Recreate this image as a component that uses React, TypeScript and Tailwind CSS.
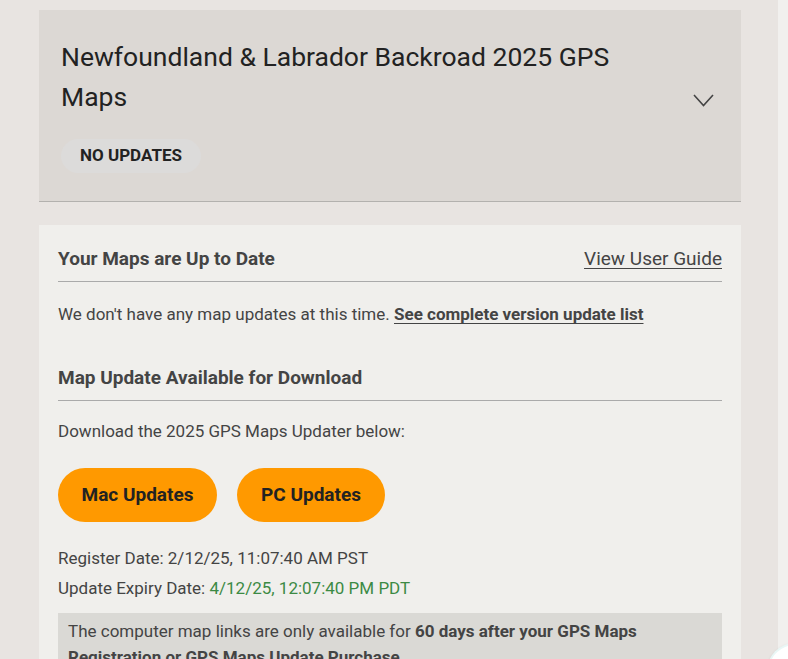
const font = { fontFamily: 'Roboto, "Liberation Sans", sans-serif' };

const App = () => {
  return (
    <div className="relative h-[659px] w-[788px] overflow-hidden bg-[#f1f0ee]" style={font}>
      <div className="h-full w-[778px] bg-[#e8e4e1] pl-[39px] pr-[37px] pt-[10px]">
        {/* Header */}
        <div className="border-b border-[#b3b1ae] bg-[#dcd8d4] pb-[28px] pl-[22px] pr-[27px] pt-[27px]">
          <div className="flex items-end justify-between">
            <h1 className="w-[600px] text-[26.5px] leading-[40px] text-[#222]">
              Newfoundland &amp; Labrador Backroad 2025 GPS Maps
            </h1>
            <svg width="21" height="13" viewBox="0 0 21 13" className="mb-[10px]" fill="none">
              <polyline points="1,1 10.5,11.5 20,1" stroke="#444" strokeWidth="1.6" />
            </svg>
          </div>
          <div className="mt-[22px] inline-flex h-[34px] items-center rounded-full bg-[#dcdbda] px-[19px] text-[17px] font-bold text-[#222]">
            NO UPDATES
          </div>
        </div>

        {/* Content */}
        <div className="mt-[23px] bg-[#f0efec] px-[19px] pt-[22px] text-[#444]">
          <div className="flex items-center justify-between border-b border-[#aaa] pb-[10px]">
            <h2 className="text-[19px] font-bold leading-[24px]">Your Maps are Up to Date</h2>
            <a className="text-[19px] leading-[24px] underline underline-offset-[3px]">View User Guide</a>
          </div>
          <p className="mt-[20px] text-[17px] leading-[24px]">
            We don't have any map updates at this time.{' '}
            <a className="font-bold underline underline-offset-[3px]">See complete version update list</a>
          </p>

          <h2 className="mt-[40px] border-b border-[#aaa] pb-[10px] text-[19px] font-bold leading-[24px]">
            Map Update Available for Download
          </h2>
          <p className="mt-[18px] text-[17px] leading-[24px]">Download the 2025 GPS Maps Updater below:</p>

          <div className="mt-[25px] flex gap-[20px]">
            <button className="h-[54px] w-[159px] rounded-full bg-[#ff9900] text-[19px] font-bold text-[#222]">
              Mac Updates
            </button>
            <button className="h-[54px] w-[148px] rounded-full bg-[#ff9900] text-[19px] font-bold text-[#222]">
              PC Updates
            </button>
          </div>

          <p className="mt-[21px] text-[17px] leading-[30px]">Register Date: 2/12/25, 11:07:40 AM PST</p>
          <p className="text-[17px] leading-[30px]">
            Update Expiry Date: <span className="text-[#3c8a44]">4/12/25, 12:07:40 PM PDT</span>
          </p>

          <div className="mt-[10px] bg-[#dad9d5] px-[10px] pb-[6px] pt-[5px] text-[17px] leading-[26px] text-[#444]">
            The computer map links are only available for{' '}
            <b>60 days after your GPS Maps Registration or GPS Maps Update Purchase</b>.
          </div>
        </div>
      </div>

      {/* floating widget peeking in the corner */}
      <div className="absolute left-[767px] top-[643px] h-[56px] w-[56px] rounded-full border-l-2 border-t-2 border-[#e9f7f6] bg-white shadow" />
    </div>
  );
};

export default App;
